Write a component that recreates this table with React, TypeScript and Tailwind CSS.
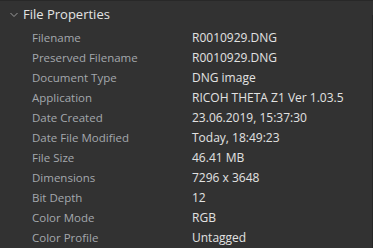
import React from "react";

const rows: [string, string][] = [
  ["Filename", "R0010929.DNG"],
  ["Preserved Filename", "R0010929.DNG"],
  ["Document Type", "DNG image"],
  ["Application", "RICOH THETA Z1 Ver 1.03.5"],
  ["Date Created", "23.06.2019, 15:37:30"],
  ["Date File Modified", "Today, 18:49:23"],
  ["File Size", "46.41 MB"],
  ["Dimensions", "7296 x 3648"],
  ["Bit Depth", "12"],
  ["Color Mode", "RGB"],
  ["Color Profile", "Untagged"],
];

export default function App() {
  return (
    <div className="w-[373px] h-[248px] bg-[#323232] border-t border-[#282828] overflow-hidden flex" style={{ fontFamily: '"Open Sans", "Noto Sans", sans-serif' }}>
      <div className="flex-1 flex flex-col">
        <div className="h-[28px] flex items-center pl-[10px] gap-[5px]">
          <svg width="8" height="6" viewBox="0 0 8 6" className="mt-[1px]">
            <path d="M0.5 1 L4 4.5 L7.5 1" fill="none" stroke="#9a9a9a" strokeWidth="1" />
          </svg>
          <span className="text-[13px] text-[#e4e4e4] leading-none">File Properties</span>
        </div>
        <div className="flex flex-col">
          {rows.map(([k, v]) => (
            <div key={k} className="h-[20px] flex items-center leading-none">
              <span className="w-[192px] pl-[32px] text-[11.5px] text-[#a4a8ad]">{k}</span>
              <span className="text-[12px] text-[#e2e2e2]">{v}</span>
            </div>
          ))}
        </div>
      </div>
      <div className="w-[1px] flex flex-col">
        <div className="h-[14px]" />
        <div className="flex-1 bg-[#262626]" />
      </div>
    </div>
  );
}
